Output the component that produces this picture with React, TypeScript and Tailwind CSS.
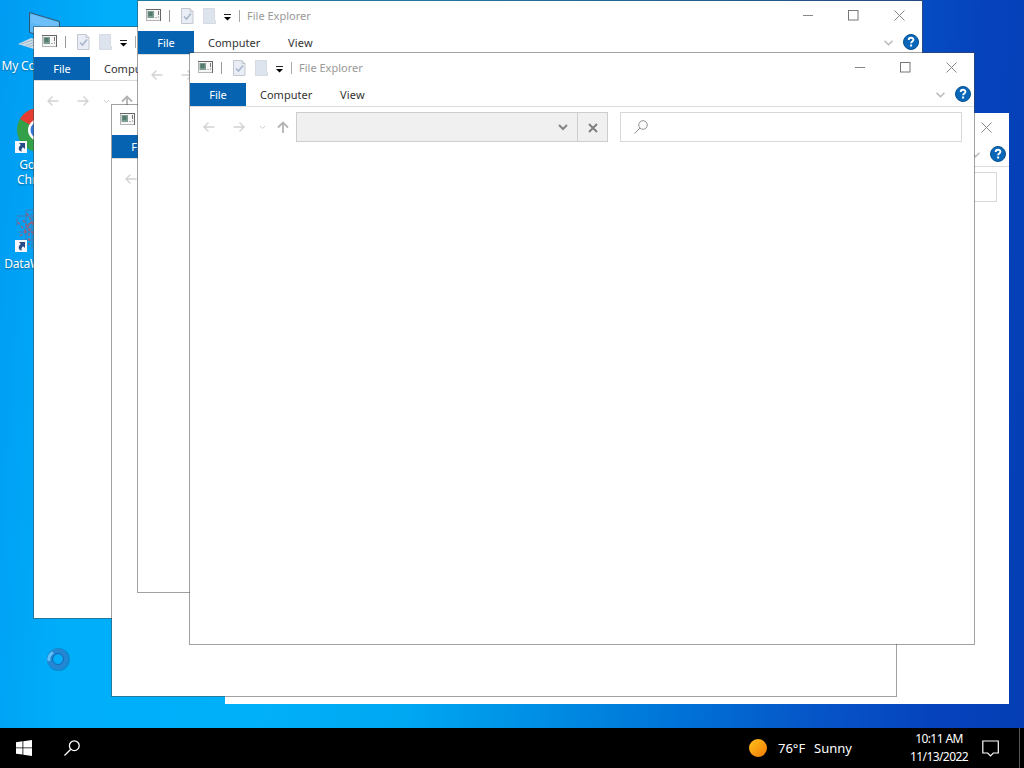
import type { ReactNode } from "react";

type WindowProps = {
    place: string;
}

const AppIcon = () => (
    <svg width="16" height="14" viewBox="0 0 16 14">
        <rect x="0.5" y="1.5" width="14" height="11" fill="#f6f6f6" stroke="#b4b4b4" />
        <path d="M0 1.500h15M14.500 2v11" stroke="#666" />
        <rect x="1.500" y="3" width="6.500" height="7" fill="#7d9c92" />
        <path d="M2.500 4h4v4h-4z" fill="#547a6d" />
        <path d="M9.500 9.500h1M12.500 3v4M12.500 8.500v1" stroke="#777" />
    </svg>
);

const CheckedDoc = () => (
    <svg width="13" height="16" viewBox="0 0 13 16">
        <path d="M.5.5h8.500l3 3v12H.5z" fill="#e9eef6" stroke="#c3c8d0" />
        <path d="M9 .5v3h3" fill="none" stroke="#c3c8d0" />
        <path d="M3 8.500l2.500 2.500L10 5.500" fill="none" stroke="#a9b5cb" strokeWidth="1.600" />
    </svg>
);

const BlankDoc = () => (
    <svg width="13" height="16" viewBox="0 0 13 16">
        <path d="M.5.5h11v11l1 1v3H.5z" fill="#dde4ee" stroke="#d6dbe3" />
    </svg>
);

const Arrow = ({ turn = "" }: { turn?: string }) => (
    <svg width="12" height="12" viewBox="0 0 12 12" className={turn} fill="none" stroke="#d2d2d2" strokeWidth="1.300">
        <path d="M11.500 6H1M5.500 1.500L1 6l4.500 4.500" />
    </svg>
);

const Help = () => (
    <svg width="16" height="16" viewBox="0 0 16 16">
        <circle cx="8" cy="8" r="7.500" fill="#0867b8" stroke="#07518f" />
        <path d="M5.700 5.900c0-2.900 4.700-2.900 4.700-.2 0 1.700-2.300 1.700-2.300 3.500" fill="none" stroke="#fff" strokeWidth="1.900" />
        <rect x="7.100" y="10.500" width="2" height="2" fill="#fff" />
    </svg>
);

const Glass = ({ size, color, width }: { size: number; color: string; width: number }) => (
    <svg width={size} height={size} viewBox="0 0 16 16" fill="none" stroke={color} strokeWidth={width}>
        <circle cx="10.300" cy="5.700" r="4.900" />
        <path d="M6.800 9.200L.5 15.500" />
    </svg>
);

const ExplorerWindow = ({ place }: WindowProps) => {
    return (
        <div className={`absolute flex h-[593px] w-[786px] flex-col border bg-white bg-clip-padding text-[11px] ${place}`}>
            <div className="flex h-[30px] shrink-0 items-center">
                <div className="flex w-[31px] pb-[2px] pl-2"><AppIcon /></div>
                <div className="h-3 w-px bg-[#999]"></div>
                <div className="ml-[11px] w-[22px]"><CheckedDoc /></div>
                <div className="w-[21px]"><BlankDoc /></div>
                <svg width="7" height="7" viewBox="0 0 7 7" className="mt-[2px]">
                    <path d="M0 3h7L3.500 6.500z" fill="#000" />
                    <path d="M0 .5h7" stroke="#222" />
                </svg>
                <div className="ml-2 h-3 w-px bg-[#aaa]"></div>
                <span className="ml-[7px] text-[#999]">File Explorer</span>
                <div className="ml-auto flex pb-[1px]">
                    <div className="flex w-[46px] items-center justify-center">
                        <svg width="11" height="11"><path d="M0 5.500h10" stroke="#888" /></svg>
                    </div>
                    <div className="flex w-[45px] items-center justify-center">
                        <svg width="11" height="11"><rect x=".5" y=".5" width="9.500" height="9.500" fill="none" stroke="#777" /></svg>
                    </div>
                    <div className="flex w-[46px] items-center justify-center">
                        <svg width="11" height="11"><path d="M.5.5l10 10M10.500.5l-10 10" stroke="#888" /></svg>
                    </div>
                </div>
            </div>
            <div className="flex h-6 shrink-0 items-center border-b border-[#dcdcdc] text-[#333]">
                <div className="flex h-[23px] w-14 items-center justify-center bg-[#0563b1] pt-px text-white">File</div>
                <span className="ml-[14px] w-20 pt-px">Computer</span>
                <span className="pt-px tracking-[0.2px]">View</span>
                <svg width="9" height="6" viewBox="0 0 9 6" className="ml-auto" fill="none" stroke="#b8b8b8" strokeWidth="1.500">
                    <path d="M.5.8l4 4 4-4" />
                </svg>
                <div className="mr-[3px] ml-[10px] pb-px"><Help /></div>
            </div>
            <div className="mt-[5px] flex h-[30px] shrink-0 items-center pr-3">
                <div className="ml-[13px] w-[30px]"><Arrow /></div>
                <div className="w-[26px]"><Arrow turn="rotate-180" /></div>
                <svg width="7" height="5" viewBox="0 0 7 5" fill="none" stroke="#cfcfcf"><path d="M1 1l2.500 2.500L6 1" /></svg>
                <svg width="12" height="12" viewBox="0 0 12 12" className="ml-[11px]" fill="none" stroke="#b4b4b4" strokeWidth="1.800">
                    <path d="M6 12V1.500M1 6.500l5-5 5 5" />
                </svg>
                <div className="ml-[7px] flex h-[30px] w-[312px] border border-[#cdcdcd] bg-[#f0f0f0]">
                    <div className="flex w-[281px] items-center justify-end border-r border-[#cdcdcd] pr-[9px]">
                        <svg width="10" height="7" viewBox="0 0 10 7" fill="none" stroke="#858585" strokeWidth="2"><path d="M1 1l4 4 4-4" /></svg>
                    </div>
                    <div className="flex flex-1 items-center justify-center pt-px">
                        <svg width="10" height="10" viewBox="0 0 10 10" stroke="#808080" strokeWidth="2"><path d="M1 1l8 8M9 1L1 9" /></svg>
                    </div>
                </div>
                <div className="ml-3 flex h-[30px] flex-1 items-center border border-[#d8d8d8] pl-[13px]">
                    <Glass size={14} color="#8a8a8a" width={1.1} />
                </div>
            </div>
        </div>
    );
}

const Shortcut = () => (
    <svg width="12" height="12" viewBox="0 0 12 12" className="absolute bottom-0 left-0">
        <path d="M0 0h12v12H0z" fill="#f4f6fa" />
        <path d="M4 2h6v6L8 6.200C6.500 7.500 6 8.500 6.800 10.500 3.500 10 2.500 6.500 5.800 4z" fill="#274b86" />
    </svg>
);

const DesktopItem = ({ place, label, children }: { place: string; label: ReactNode; children: ReactNode }) => (
    <div className={`absolute left-0 flex w-[76px] flex-col items-center text-center text-[12px] leading-[15px] text-white ${place}`}>
        <div className="relative h-11 w-[46px]">{children}</div>
        <div className="mt-1 ml-0.5 tracking-[-0.2px] whitespace-nowrap [text-shadow:0_1px_2px_rgba(0,0,0,0.4)]">{label}</div>
    </div>
);

const App = () => {
    return (
        <div className="relative flex h-[768px] w-[1024px] flex-col overflow-hidden bg-black font-['Noto_Sans','Open_Sans',sans-serif]">
            <div className="relative h-[728px] bg-[linear-gradient(94deg,#009bf2_0%,#00aefa_10%,#00b0f8_28%,#00a8f2_42%,#008ee4_55%,#0070d6_69%,#0656c8_80%,#0542bc_92%,#053eb4_100%)]">
                <DesktopItem place="top-[10px]" label="My Computer">
                    <svg width="46" height="44" viewBox="0 0 46 44">
                        <path d="M14.500 2.500l30 9v20l-30-9z" fill="#5ab8f7" stroke="#31566f" />
                        <path d="M16 4.500l27 8v8l-27-8z" fill="#6cbff8" />
                        <path d="M3 34l13-6 22 6-13 7z" fill="#c9dbe7" />
                        <path d="M6 34l12-4M10 36l12-5M14 37l12-5" stroke="#9db9ca" />
                    </svg>
                </DesktopItem>
                <DesktopItem place="top-[109px]" label={<>Google<br />Chrome</>}>
                    <svg width="46" height="44" viewBox="0 0 46 44">
                        <circle cx="24" cy="21" r="22" fill="#35a04a" />
                        <path d="M24 21L5 10A22 22 0 0 1 43 10z" fill="#e53b30" />
                        <path d="M24 21L43 10A22 22 0 0 1 24 43z" fill="#fbc116" />
                        <circle cx="24" cy="21" r="11" fill="#fff" />
                        <circle cx="24" cy="21" r="8.500" fill="#3275d8" />
                    </svg>
                    <Shortcut />
                </DesktopItem>
                <DesktopItem place="top-[208px]" label="DataWorks 8">
                    <svg width="46" height="44" viewBox="0 0 46 44" fill="none">
                        <path d="M2 8h42M12 2h30M4 24h40M6 32h36M11 2v36M17 5v36M27 2v38M2 10v8" stroke="#4a76ae" />
                        <path d="M3 14l7 9 7-10 8 12M5 28l10-7 9 13M12 5l7 13M8 12l8 12M14 15v22" stroke="#96607f" strokeWidth="1.500" strokeDasharray="3 2" />
                    </svg>
                    <Shortcut />
                </DesktopItem>

                {/* busy cursor */}
                <svg width="26" height="26" viewBox="0 0 26 26" className="absolute top-[647px] left-[45px]" fill="none">
                    <circle cx="13.500" cy="12.500" r="8.500" stroke="#1768ad" strokeWidth="6" opacity=".5" />
                    <circle cx="12.500" cy="12" r="8" stroke="#2587d4" strokeWidth="5" />
                    <path d="M4 14a8 8 0 0 1 4-8.500" stroke="#5fc2fa" strokeWidth="3" />
                    <circle cx="13" cy="12" r="5.500" stroke="#1a69b4" />
                </svg>

                <ExplorerWindow place="top-[112px] left-[224px] border-transparent" />
                <ExplorerWindow place="top-[26px] left-[33px] border-[#444]/50" />
                <ExplorerWindow place="top-[104px] left-[111px] border-[#444]/50" />
                <ExplorerWindow place="top-0 left-[137px] border-[#444]/50" />
                <ExplorerWindow place="top-[52px] left-[189px] border-[#444]/50" />
            </div>

            <div className="flex h-10 items-center bg-black text-white">
                <svg width="16" height="16" viewBox="0 0 16 16" className="ml-4" fill="#fff">
                    <path d="M0 2.300L6.500 1.300v6.200H0zM7.300 1.200L16 0v7.500H7.300zM0 8.300h6.500v6.300L0 13.700zM7.300 8.300H16V16l-8.700-1.300z" />
                </svg>
                <div className="ml-8"><Glass size={16} color="#fff" width={1.300} /></div>
                <div className="ml-auto h-[18px] w-[18px] rounded-full bg-linear-to-br from-[#ffc21a] to-[#f07a05]"></div>
                <span className="ml-[11px] w-9 pt-px text-[13px]">76°F</span>
                <span className="w-[96px] pt-px text-[13px]">Sunny</span>
                <div className="w-[58px] text-center text-[12px] leading-[18px] tracking-[-0.6px] whitespace-nowrap">
                    <div>10:11 AM</div>
                    <div>11/13/2022</div>
                </div>
                <svg width="17" height="17" viewBox="0 0 17 17" className="ml-[14px]" fill="none" stroke="#fff" strokeWidth="1.200">
                    <path d="M.8 1h15.500v12h-5l-2.800 2.800L5.700 13H.8z" />
                </svg>
                <div className="mr-1 ml-5 h-10 w-px bg-[#555]"></div>
            </div>
        </div>
    );
};

export default App;
